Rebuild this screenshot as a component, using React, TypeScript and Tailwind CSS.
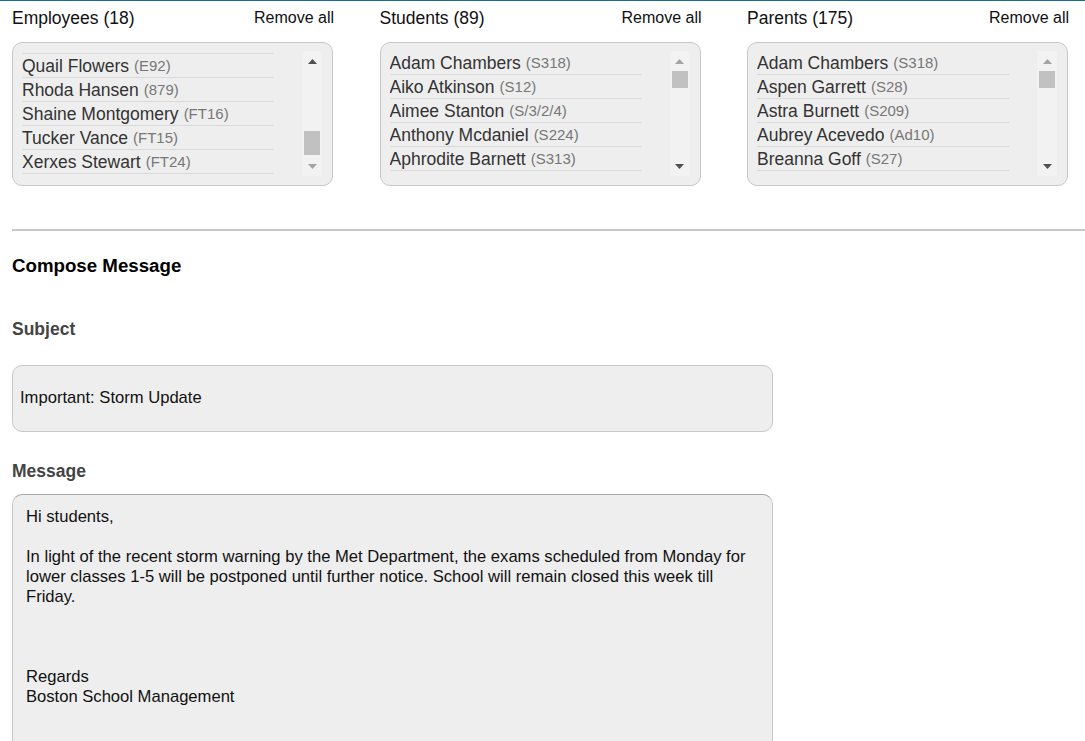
import React from "react";

type Item = { name: string; code: string };

const employees: Item[] = [
  { name: "Quail Flowers", code: "(E92)" },
  { name: "Rhoda Hansen", code: "(879)" },
  { name: "Shaine Montgomery", code: "(FT16)" },
  { name: "Tucker Vance", code: "(FT15)" },
  { name: "Xerxes Stewart", code: "(FT24)" },
];
const students: Item[] = [
  { name: "Adam Chambers", code: "(S318)" },
  { name: "Aiko Atkinson", code: "(S12)" },
  { name: "Aimee Stanton", code: "(S/3/2/4)" },
  { name: "Anthony Mcdaniel", code: "(S224)" },
  { name: "Aphrodite Barnett", code: "(S313)" },
];
const parents: Item[] = [
  { name: "Adam Chambers", code: "(S318)" },
  { name: "Aspen Garrett", code: "(S28)" },
  { name: "Astra Burnett", code: "(S209)" },
  { name: "Aubrey Acevedo", code: "(Ad10)" },
  { name: "Breanna Goff", code: "(S27)" },
];

function Arrow({ up, dark }: { up: boolean; dark: boolean }) {
  return (
    <svg width="9" height="5" viewBox="0 0 9 5" className="block">
      <polygon
        points={up ? "4.5,0 9,5 0,5" : "0,0 9,0 4.5,5"}
        fill={dark ? "#505050" : "#a3a3a3"}
      />
    </svg>
  );
}

function Column({
  title,
  items,
  atBottom,
}: {
  title: string;
  items: Item[];
  atBottom: boolean;
}) {
  return (
    <div className="flex flex-col">
      <div className="flex justify-between items-center h-[24px] text-[#111]">
        <span className="text-[17.5px]">{title}</span>
        <span className="text-[16px] mr-[-1px]">Remove all</span>
      </div>
      <div className="mt-[12px] h-[144px] rounded-[10px] border border-[#c8c8c8] bg-[#eeeeee] flex pl-[9px] pr-[10px] pt-[8px]">
        <div className={"w-[252px] h-[125px] overflow-hidden " + (atBottom ? "pt-[1px]" : "")}>
          {atBottom && <div className="h-[2px] border-b border-[#d8d8d8]" />}
          {items.map((it) => (
            <div
              key={it.name}
              className="h-[24px] border-b border-[#d8d8d8] flex items-center pt-[2px] whitespace-nowrap"
            >
              <span className="text-[17.5px] text-[#333]">{it.name}</span>
              <span className="text-[15px] text-[#777] ml-[5px]">{it.code}</span>
            </div>
          ))}
        </div>
        <div className="ml-[28px] w-[20px] h-[125px] bg-[#f2f2f2] flex flex-col items-center">
          <div className="h-[20px] flex items-center justify-center">
            <Arrow up dark={atBottom} />
          </div>
          <div className="flex-1 w-full px-[2px] flex flex-col">
            {atBottom ? (
              <div className="mt-auto mb-[1px] h-[24px] bg-[#c1c1c1]" />
            ) : (
              <div className="h-[17px] bg-[#c1c1c1]" />
            )}
          </div>
          <div className="h-[20px] flex items-center justify-center">
            <Arrow up={false} dark={!atBottom} />
          </div>
        </div>
      </div>
    </div>
  );
}

export default function App() {
  const msgLines = [
    "Hi students,",
    "",
    "In light of the recent storm warning by the Met Department, the exams scheduled from Monday for",
    "lower classes 1-5 will be postponed until further notice. School will remain closed this week till",
    "Friday.",
    "",
    "",
    "",
    "Regards",
    "Boston School Management",
  ];
  return (
    <div
      className="w-full min-h-[741px] bg-white border-t border-[#1d6a96] overflow-hidden"
      style={{ fontFamily: '"Liberation Sans", Arial, sans-serif' }}
    >
      <div className="pl-[12px] pt-[5px]">
        <div className="grid grid-cols-3 w-[1056px] gap-x-[46.5px]">
          <Column title="Employees (18)" items={employees} atBottom />
          <Column title="Students (89)" items={students} atBottom={false} />
          <Column title="Parents (175)" items={parents} atBottom={false} />
        </div>
        <div className="mt-[43px] h-[2px] bg-[#c8c8c8]" />
        <div className="mt-[23px] h-[24px] flex items-center text-[18.7px] font-bold text-black">
          Compose Message
        </div>
        <div className="mt-[39px] h-[24px] flex items-center text-[17.5px] font-bold text-[#444]">
          Subject
        </div>
        <div className="mt-[24px] w-[761px] h-[67px] rounded-[10px] border border-[#c8c8c8] bg-[#eeeeee] flex items-center pl-[7px] text-[16.6px] text-[#111]">
          Important: Storm Update
        </div>
        <div className="mt-[27px] h-[24px] flex items-center text-[17.5px] font-bold text-[#444]">
          Message
        </div>
        <div className="mt-[11px] w-[761px] h-[300px] rounded-t-[10px] border border-[#c8c8c8] border-t-[#aaaaaa] bg-[#eeeeee] pl-[13px] pt-[12px] text-[16.6px] text-[#111] leading-[20px]">
          {msgLines.map((l, i) => (
            <div key={i} className="h-[20px] whitespace-nowrap">
              {l}
            </div>
          ))}
        </div>
      </div>
    </div>
  );
}
